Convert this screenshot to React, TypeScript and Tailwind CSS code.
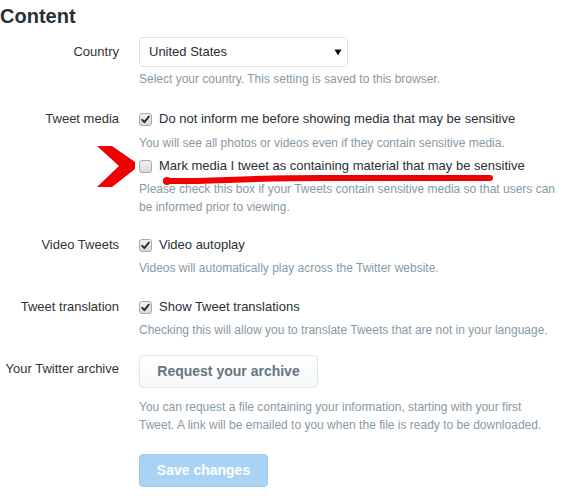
import React from "react";

function CheckBox({ checked }: { checked: boolean }) {
  return (
    <svg width="13" height="13" viewBox="0 0 13 13" className="shrink-0">
      <defs>
        <linearGradient id={checked ? "cbg1" : "cbg0"} x1="0" y1="0" x2="0" y2="1">
          <stop offset="0" stopColor="#f4f4f4" />
          <stop offset="1" stopColor="#d8d8d8" />
        </linearGradient>
      </defs>
      <rect x="0.5" y="0.5" width="12" height="12" rx="2.5" fill={`url(#${checked ? "cbg1" : "cbg0"})`} stroke="#a8a8a8" />
      {checked && (
        <path d="M3.2 6.8 L5.4 9.2 L9.8 3.6" fill="none" stroke="#2b2b2b" strokeWidth="1.9" strokeLinecap="round" strokeLinejoin="round" />
      )}
    </svg>
  );
}

function Row({
  label,
  labelClass = "leading-[20px]",
  children,
  className = "",
}: {
  label: string;
  labelClass?: string;
  children: React.ReactNode;
  className?: string;
}) {
  return (
    <div className={`flex ${className}`}>
      <div className={`w-[119px] shrink-0 text-right text-[13px] text-[#333] whitespace-nowrap ${labelClass}`}>{label}</div>
      <div className="ml-[20px] flex-1 min-w-0">{children}</div>
    </div>
  );
}

function CheckLine({ checked, text, className = "" }: { checked: boolean; text: string; className?: string }) {
  return (
    <div className={`flex items-center gap-[7px] text-[13px] leading-[20px] text-[#292f33] whitespace-nowrap ${className}`}>
      <CheckBox checked={checked} />
      <span>{text}</span>
    </div>
  );
}

function Help({ children, className = "" }: { children: React.ReactNode; className?: string }) {
  return <div className={`text-[12px] leading-[18px] text-[#8899a6] ${className}`}>{children}</div>;
}

export default function App() {
  return (
    <div className="relative w-[563px] h-[496px] overflow-hidden bg-white font-['Liberation_Sans',Arial,sans-serif]">
      <h2 className="pt-[4px] text-[20px] leading-[24px] font-bold text-[#292f33]">Content</h2>

      <Row label="Country" labelClass="leading-[30px]" className="mt-[9px]">
        <div className="flex h-[30px] w-[209px] items-center justify-between rounded-[4px] border border-[#dfe3e6] bg-white pl-[9px] pr-[5px] text-[13px] text-[#292f33]">
          <span>United States</span>
          <svg width="8" height="7" viewBox="0 0 8 7">
            <path d="M0.5 0.5 H7.5 L4 6.5 Z" fill="#111" />
          </svg>
        </div>
        <Help className="mt-[3px]">Select your country. This setting is saved to this browser.</Help>
      </Row>

      <Row label="Tweet media" className="mt-[21px]">
        <CheckLine checked text="Do not inform me before showing media that may be sensitive" />
        <Help className="mt-[5px]">You will see all photos or videos even if they contain sensitive media.</Help>
        <CheckLine checked={false} text="Mark media I tweet as containing material that may be sensitive" className="mt-[4px]" />
        <Help className="mt-[4px] pr-[2px]">
          Please check this box if your Tweets contain sensitive media so that users can be informed prior to viewing.
        </Help>
      </Row>

      <Row label="Video Tweets" className="mt-[19px]">
        <CheckLine checked text="Video autoplay" />
        <Help className="mt-[4px]">Videos will automatically play across the Twitter website.</Help>
      </Row>

      <Row label="Tweet translation" className="mt-[20px]">
        <CheckLine checked text="Show Tweet translations" />
        <Help className="mt-[4px] whitespace-nowrap">
          Checking this will allow you to translate Tweets that are not in your language.
        </Help>
      </Row>

      <Row label="Your Twitter archive" labelClass="leading-[28px]" className="mt-[16px]">
        <button className="flex h-[33px] w-[179px] items-center justify-center rounded-[4px] border border-[#e1e8ed] bg-gradient-to-b from-white to-[#f5f8fa] text-[14px] font-bold text-[#66757f]">
          Request your archive
        </button>
        <Help className="mt-[10px] w-[420px]">
          You can request a file containing your information, starting with your first Tweet. A link will be emailed to
          you when the file is ready to be downloaded.
        </Help>
        <button className="mt-[20px] flex h-[33px] w-[129px] items-center justify-center rounded-[4px] border border-[#9dcbef] bg-[#a8d3f4] text-[14px] font-bold text-white">
          Save changes
        </button>
      </Row>

      <svg className="pointer-events-none absolute left-0 top-0" width="563" height="496" viewBox="0 0 563 496">
        <polygon points="97,146 112,146 135,162 135,169 112,187 97,187 119,166" fill="#f00000" />
        <path
          d="M166 181 C 200 182, 250 178, 320 178 S 450 178, 490 178"
          fill="none"
          stroke="#f00000"
          strokeWidth="6"
          strokeLinecap="round"
        />
        <circle cx="167" cy="181" r="4" fill="#f00000" />
      </svg>
    </div>
  );
}
